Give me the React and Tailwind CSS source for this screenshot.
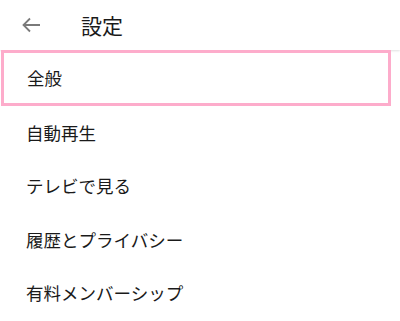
const ITEMS = ['全般', '自動再生', 'テレビで見る', '履歴とプライバシー', '有料メンバーシップ'];

function BackArrow() {
  return (
    <svg width="20" height="16" viewBox="0 0 20 16" fill="none" className="text-[#7a7a7a]">
      <path d="M19 8H2.5M9 1.5L2.5 8L9 14.5" stroke="currentColor" strokeWidth="1.8" />
    </svg>
  );
}

export default function App() {
  return (
    <div
      className="w-[400px] h-[321px] overflow-hidden bg-white text-[#1a1a1a]"
      style={{ fontFamily: '"Noto Sans CJK JP", "Noto Sans", sans-serif' }}
    >
      <header className="relative z-10 h-[50px] flex items-center bg-white shadow-[0_1px_2px_rgba(0,0,0,0.12)]">
        <div className="w-[62px] flex items-center pl-[21px]">
          <BackArrow />
        </div>
        <h1 className="ml-[19px] text-[21px] leading-none">設定</h1>
      </header>
      <ul>
        {ITEMS.map((label, i) => (
          <li
            key={label}
            className={`flex items-center text-[17.5px] ${
              i === 0
                ? 'ml-[1px] mr-[9px] border-[3px] border-[#fdaccb] pl-[23px] relative z-20 h-[56px]'
                : 'h-[53.5px] pl-[26px]'
            }`}
          >
            {label}
          </li>
        ))}
      </ul>
    </div>
  );
}
